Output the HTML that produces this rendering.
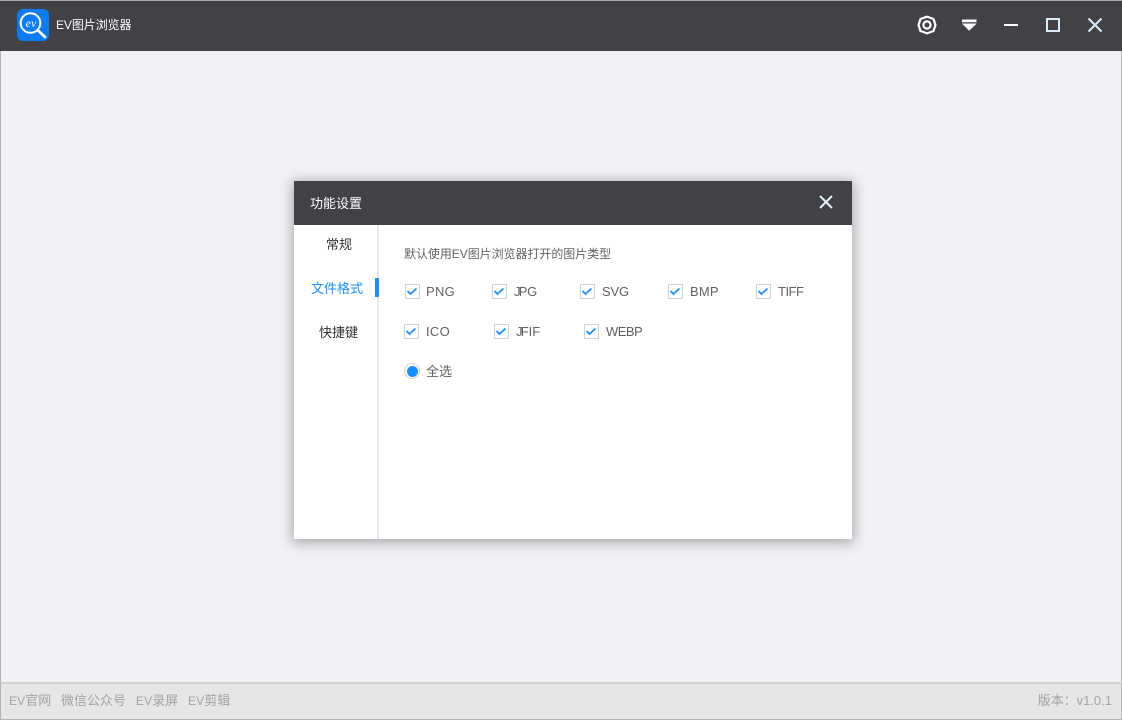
<!DOCTYPE html>
<html lang="zh-CN">
<head>
<meta charset="utf-8">
<title>EV图片浏览器</title>
<style>
html,body{margin:0;padding:0;}
body{width:1122px;height:720px;overflow:hidden;position:relative;background:#f0f2f5;font-family:"Liberation Sans","Noto Sans CJK SC",sans-serif;}
div,svg{position:absolute;box-sizing:border-box;}
.t{white-space:nowrap;line-height:20px;}
.box{width:15px;height:15px;border:1px solid #d0d2d5;background:#fff;}
.lab{font-size:13px;color:#606266;}
.ft{font-size:13px;color:#a3a3a3;}
.ft b{font-weight:normal;font-size:12px;letter-spacing:.1px;}
</style>
</head>
<body>
<div style="left:0;top:0;width:1122px;height:720px;border:1px solid #b4b4b4;border-top:none;border-bottom:none;"></div>
<div style="left:0;top:0;width:1122px;height:51px;background:#414146;border-top:1px solid #a8a8a8;"></div>

<svg style="left:17px;top:9px" width="32" height="32" viewBox="0 0 32 32">
<rect width="32" height="32" rx="6" fill="#0b7cf4"/>
<circle cx="13.500" cy="14" r="9.800" fill="none" stroke="#fff" stroke-width="2"/>
<path d="M21.500 22L28 28" stroke="#fff" stroke-width="2.800" stroke-linecap="round"/>
<text x="14" y="18" text-anchor="middle" font-family="Liberation Serif" font-style="italic" font-size="12" fill="#fff">ev</text>
</svg>
<div class="t" style="left:56px;top:15px;font-size:12px;letter-spacing:-.08px;color:#fff;">EV图片浏览器</div>

<svg style="left:917px;top:15px" width="20" height="20" viewBox="0 0 20 20" fill="none" stroke="#fff">
<path d="M10 1.600L16.500 4L18.500 10L16.500 16L10 18.400L3.500 16L1.500 10L3.500 4Z" stroke-width="2.200" stroke-linejoin="round"/>
<circle cx="10" cy="10" r="3.600" stroke-width="2.200"/>
</svg>
<svg style="left:961px;top:19px" width="16" height="13" viewBox="0 0 16 13" fill="#fff">
<rect x="1" y="0.500" width="14.500" height="2.700"/>
<path d="M0.800 4.500H15.700L8.200 11.800Z"/>
</svg>
<div style="left:1004px;top:24px;width:14px;height:2px;background:#fff;"></div>
<div style="left:1046px;top:18px;width:14px;height:14px;border:2px solid #d8ecfb;"></div>
<svg style="left:1087px;top:17px" width="16" height="16" viewBox="0 0 16 16" stroke="#d8ecfb" stroke-width="2"><path d="M1.500 1.500L14.500 14.500M14.500 1.500L1.500 14.500"/></svg>

<!-- Dialog -->
<div style="left:294px;top:181px;width:558px;height:358px;background:#fff;box-shadow:0 2px 12px 2px rgba(0,0,0,.3);"></div>
<div style="left:294px;top:181px;width:558px;height:44px;background:#414146;"></div>
<div class="t" style="left:310px;top:194px;font-size:13px;color:#fff;">功能设置</div>
<svg style="left:819px;top:195px" width="14" height="14" viewBox="0 0 14 14" stroke="#e6f2fa" stroke-width="2"><path d="M1 1L13 13M13 1L1 13"/></svg>

<div style="left:377px;top:225px;width:2px;height:314px;background:#e6eaf0;"></div>
<div style="left:375px;top:278px;width:4px;height:19px;background:#1890ff;"></div>
<div class="t" style="left:326px;top:235px;font-size:13px;color:#303133;">常规</div>
<div class="t" style="left:311px;top:279px;font-size:13px;color:#1890ff;">文件格式</div>
<div class="t" style="left:319px;top:323px;font-size:13px;color:#303133;">快捷键</div>

<div class="t" style="left:404px;top:244px;font-size:12px;letter-spacing:-.05px;color:#606266;">默认使用EV图片浏览器打开的图片类型</div>

<!-- row 1 -->
<div class="box" style="left:405px;top:284px;"></div>
<svg style="left:405px;top:284px" width="15" height="15" viewBox="0 0 15 15" fill="none" stroke="#1890ff" stroke-width="1.800"><path d="M2.500 7L5.500 10L11.500 4.500"/></svg>
<div class="t lab" style="left:426px;top:282px;letter-spacing:.3px;">PNG</div>
<div class="box" style="left:492px;top:284px;"></div>
<svg style="left:492px;top:284px" width="15" height="15" viewBox="0 0 15 15" fill="none" stroke="#1890ff" stroke-width="1.800"><path d="M2.500 7L5.500 10L11.500 4.500"/></svg>
<div class="t lab" style="left:514px;top:282px;"><span style="letter-spacing:-1.800px;">J</span><span style="letter-spacing:-.2px;">PG</span></div>
<div class="box" style="left:580px;top:284px;"></div>
<svg style="left:580px;top:284px" width="15" height="15" viewBox="0 0 15 15" fill="none" stroke="#1890ff" stroke-width="1.800"><path d="M2.500 7L5.500 10L11.500 4.500"/></svg>
<div class="t lab" style="left:602px;top:282px;letter-spacing:-.15px;">SVG</div>
<div class="box" style="left:668px;top:284px;"></div>
<svg style="left:668px;top:284px" width="15" height="15" viewBox="0 0 15 15" fill="none" stroke="#1890ff" stroke-width="1.800"><path d="M2.500 7L5.500 10L11.500 4.500"/></svg>
<div class="t lab" style="left:690px;top:282px;letter-spacing:.2px;">BMP</div>
<div class="box" style="left:756px;top:284px;"></div>
<svg style="left:756px;top:284px" width="15" height="15" viewBox="0 0 15 15" fill="none" stroke="#1890ff" stroke-width="1.800"><path d="M2.500 7L5.500 10L11.500 4.500"/></svg>
<div class="t lab" style="left:778px;top:282px;letter-spacing:-.5px;">TIFF</div>

<!-- row 2 -->
<div class="box" style="left:404px;top:324px;"></div>
<svg style="left:404px;top:324px" width="15" height="15" viewBox="0 0 15 15" fill="none" stroke="#1890ff" stroke-width="1.800"><path d="M2.500 7L5.500 10L11.500 4.500"/></svg>
<div class="t lab" style="left:426px;top:322px;letter-spacing:.3px;">ICO</div>
<div class="box" style="left:494px;top:324px;"></div>
<svg style="left:494px;top:324px" width="15" height="15" viewBox="0 0 15 15" fill="none" stroke="#1890ff" stroke-width="1.800"><path d="M2.500 7L5.500 10L11.500 4.500"/></svg>
<div class="t lab" style="left:516px;top:322px;"><span style="letter-spacing:-1.800px;">J</span><span>FIF</span></div>
<div class="box" style="left:584px;top:324px;"></div>
<svg style="left:584px;top:324px" width="15" height="15" viewBox="0 0 15 15" fill="none" stroke="#1890ff" stroke-width="1.800"><path d="M2.500 7L5.500 10L11.500 4.500"/></svg>
<div class="t lab" style="left:606px;top:322px;letter-spacing:-.55px;">WEBP</div>

<!-- radio -->
<div style="left:404px;top:363px;width:16px;height:16px;border-radius:50%;border:1px solid #d0d2d5;background:#fff;"></div>
<div style="left:406.500px;top:365.500px;width:11px;height:11px;border-radius:50%;background:#1890ff;"></div>
<div class="t" style="left:426px;top:362px;font-size:13px;color:#606266;">全选</div>

<!-- Footer -->
<div style="left:0;top:682px;width:1122px;height:38px;background:#e6e6e6;border-top:2px solid #d4d4d4;border-bottom:1px solid #b4b4b4;border-left:1px solid #b4b4b4;border-right:1px solid #b4b4b4;"></div>
<div class="t ft" style="left:9px;top:691px;"><b>EV</b>官网</div>
<div class="t ft" style="left:61px;top:691px;">微信公众号</div>
<div class="t ft" style="left:136px;top:691px;"><b>EV</b>录屏</div>
<div class="t ft" style="left:188px;top:691px;"><b>EV</b>剪辑</div>
<div class="t ft" style="right:10px;top:691px;">版本：v1.0.1</div>
</body>
</html>
